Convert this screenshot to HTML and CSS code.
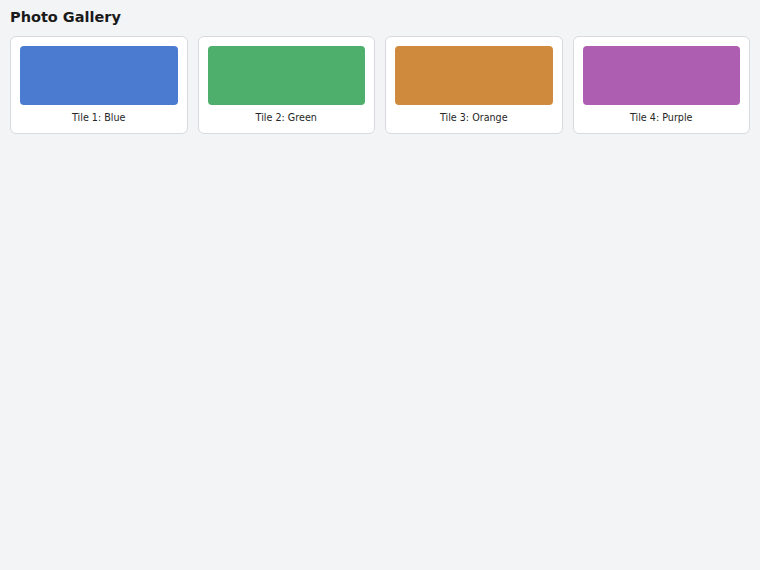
FILE: index.html
```html
<!DOCTYPE html>
<html lang="en">
<head>
    <meta charset="UTF-8">
    <meta name="viewport" content="width=device-width, initial-scale=1.0">
    <title>Photo Gallery</title>
    <link rel="stylesheet" href="styles.css">
</head>
<body>
    <h1>Photo Gallery</h1>

    <div class="gallery">
        <div class="tile">
            <div class="swatch blue"></div>
            <p class="caption">Tile 1: Blue</p>
        </div>
        <div class="tile">
            <div class="swatch green"></div>
            <p class="caption">Tile 2: Green</p>
        </div>
        <div class="tile">
            <div class="swatch orange"></div>
            <p class="caption">Tile 3: Orange</p>
        </div>
        <div class="tile">
            <div class="swatch purple"></div>
            <p class="caption">Tile 4: Purple</p>
        </div>
    </div>
</body>
</html>
```

FILE: styles.css
```css
body {
    font-family: "DejaVu Sans", sans-serif;
    margin: 0;
    padding: 7px 10px;
    background-color: #f3f4f6;
    color: #222;
}
h1 {
    font-size: 14.5px;
    line-height: 20px;
    margin: 0 0 9px;
    color: #1a1a1a;
}
.gallery {
    display: grid;
    grid-template-columns: repeat(4, 1fr);
    gap: 10px;
}
.tile {
    background: #ffffff;
    border: 1px solid #d9dadf;
    border-radius: 6px;
    padding: 9px 9px 8px;
}
.swatch {
    height: 59px;
    border-radius: 4px;
}
.blue { background-color: #4a7bd1; }
.green { background-color: #4eae6c; }
.orange { background-color: #d08a3e; }
.purple { background-color: #ae5eb0; }
.caption {
    margin: 6px 0 0;
    font-size: 9.6px;
    line-height: 14px;
    text-align: center;
    color: #262626;
}
```
